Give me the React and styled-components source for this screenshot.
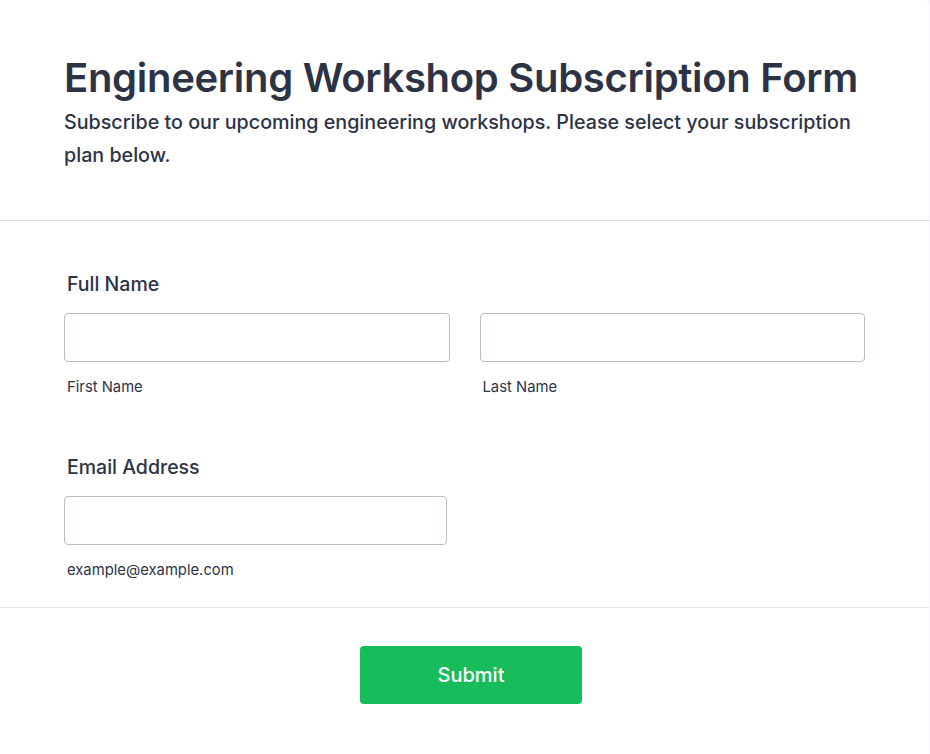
import React from "react";
import styled, { createGlobalStyle } from "styled-components";

const GlobalStyle = createGlobalStyle`
  body {
    margin: 0;
    background-color: #f3f3fe;
    font-family: Inter, "Noto Sans", sans-serif;
    color: #2c3345;
  }
`;

const Card = styled.form`
  width: 929px;
  min-height: 754px;
  background-color: #fff;
  border-radius: 0 4px 0 0;
`;

const Header = styled.header`
  padding: 54px 64px 48px;
  border-bottom: 1px solid #d8dae9;
`;

const Title = styled.h1`
  margin: 0;
  font-size: 40px;
  line-height: 48px;
  font-weight: 600;
  letter-spacing: -0.3px;
`;

const Subtitle = styled.p`
  margin: 4px 0 0;
  font-size: 19.7px;
  line-height: 33px;
  font-weight: 500;
  max-width: 800px;
`;

const Body = styled.div`
  padding: 51px 64px 27px;
  display: flex;
  flex-direction: column;
  gap: 58px;
`;

const Field = styled.div`
  display: flex;
  flex-direction: column;
`;

const Label = styled.label`
  margin: 0 0 17px 3px;
  font-size: 19.5px;
  line-height: 24px;
  font-weight: 500;
`;

const Row = styled.div`
  display: grid;
  grid-template-columns: ${(p) => (p.cols === 2 ? "1fr 1fr" : "383px")};
  column-gap: 30px;
`;

const Cell = styled.div`
  display: flex;
  flex-direction: column;
`;

const Input = styled.input`
  box-sizing: border-box;
  height: 49px;
  width: 100%;
  border: 1px solid #b8bdc9;
  border-radius: 4px;
  padding: 0 12px;
  font-family: inherit;
  font-size: 16px;
  color: #2c3345;
  background: #fff;
`;

const Sublabel = styled.span`
  margin: 15px 0 0 3px;
  font-size: 14.8px;
  line-height: 20px;
  color: #2c3345;
`;

const Footer = styled.div`
  border-top: 1px solid #e6e6ef;
  display: flex;
  justify-content: center;
  padding: 38px 0 49px 13px;
`;

const SubmitButton = styled.button`
  width: 222px;
  height: 58px;
  border: none;
  border-radius: 4px;
  background-color: #18bd5b;
  color: #fff;
  font-family: inherit;
  font-size: 20px;
  font-weight: 500;
  cursor: pointer;
`;

const App = () => {
  return (
    <>
      <GlobalStyle />
      <Card onSubmit={(e) => e.preventDefault()}>
        <Header>
          <Title>Engineering Workshop Subscription Form</Title>
          <Subtitle>
            Subscribe to our upcoming engineering workshops. Please select your
            subscription plan below.
          </Subtitle>
        </Header>
        <Body>
          <Field>
            <Label>Full Name</Label>
            <Row cols={2}>
              <Cell>
                <Input type="text" />
                <Sublabel>First Name</Sublabel>
              </Cell>
              <Cell>
                <Input type="text" />
                <Sublabel>Last Name</Sublabel>
              </Cell>
            </Row>
          </Field>
          <Field>
            <Label>Email Address</Label>
            <Row cols={1}>
              <Cell>
                <Input type="email" />
                <Sublabel>example@example.com</Sublabel>
              </Cell>
            </Row>
          </Field>
        </Body>
        <Footer>
          <SubmitButton type="submit">Submit</SubmitButton>
        </Footer>
      </Card>
    </>
  );
};

export default App;
